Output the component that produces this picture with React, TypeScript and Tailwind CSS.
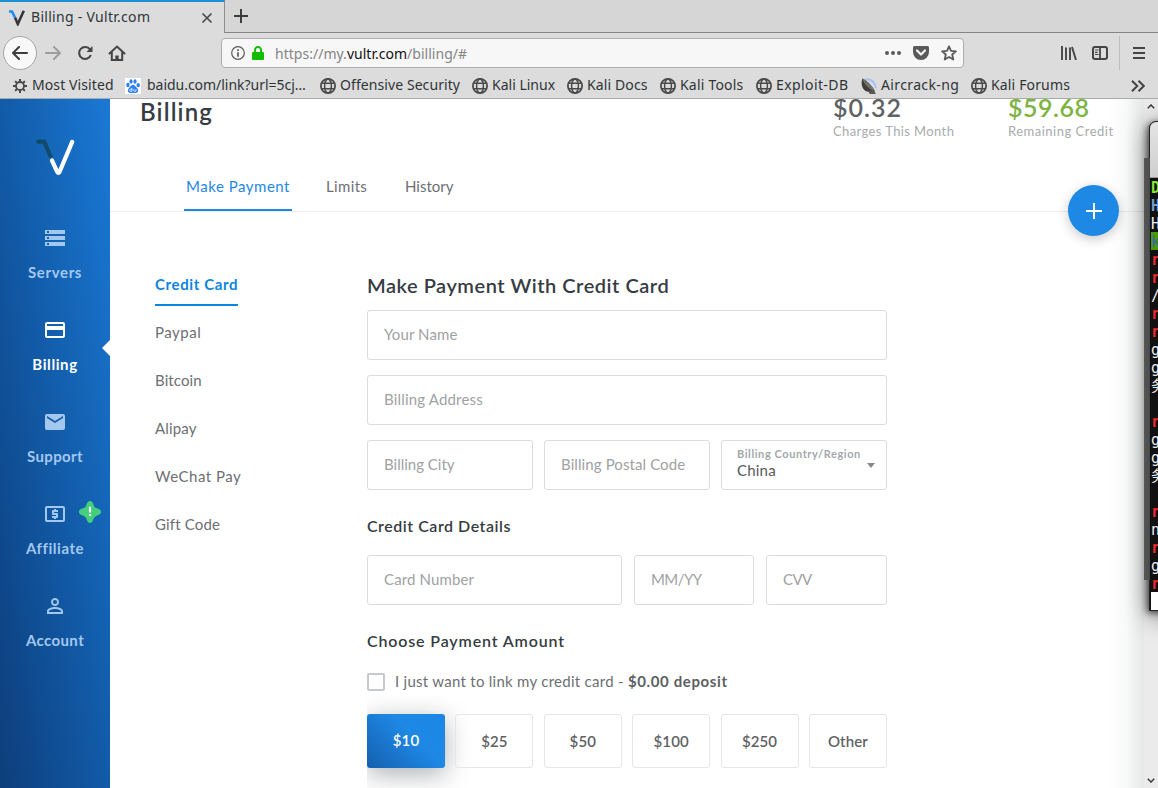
import type { ReactNode } from "react";
import { MdStorage, MdOutlinePayment, MdEmail, MdLocalAtm, MdPersonOutline } from "react-icons/md";

const GlobeIcon = () => (
  <svg width="16" height="16" viewBox="0 0 16 16" fill="none" stroke="#4a4a4a" strokeWidth="1.5" className="shrink-0">
    <circle cx="8" cy="8" r="7.1" strokeWidth="1.8" />
    <ellipse cx="8" cy="8" rx="3.4" ry="7" />
    <path d="M2 5.3h12M2 10.7h12" />
  </svg>
);

const GearIcon = () => (
  <svg width="16" height="16" viewBox="0 0 16 16" fill="none" stroke="#4a4a4a" className="shrink-0">
    <circle cx="8" cy="8" r="4" strokeWidth="1.8" />
    <path
      strokeWidth="2"
      d="M8 1v3M8 12v3M1 8h3M12 8h3M3.1 3.1l2 2M10.9 10.9l2 2M3.1 12.9l2-2M10.9 5.1l2-2"
    />
  </svg>
);

const PawIcon = () => (
  <svg width="16" height="16" viewBox="0 0 16 16" className="shrink-0">
    <rect width="16" height="16" fill="#fff" />
    <g fill="#2f80f2">
      <ellipse cx="2.9" cy="7" rx="1.7" ry="2.2" />
      <ellipse cx="6" cy="3.5" rx="1.6" ry="2.3" />
      <ellipse cx="10" cy="3.5" rx="1.6" ry="2.3" />
      <ellipse cx="13.2" cy="7.2" rx="1.7" ry="2.1" />
      <path d="M8 6.8c1.6 0 2.3 1.6 3.5 2.8 1.300 1.300 2 2.300 1.500 3.800-.5 1.700-2.300 1.700-5 1.600-2.700.1-4.500.1-5-1.600-.5-1.500.2-2.500 1.500-3.800C5.700 8.400 6.400 6.800 8 6.800z" />
    </g>
    <path d="M6.900 10v3.300H5.300c-1-.2-1-1.900 0-2h1.600M8.800 11.200v1.700c.3.600 1.600.6 2.200.2v-1.900" stroke="#fff" strokeWidth=".8" fill="none" />
  </svg>
);

const DishIcon = () => (
  <svg width="16" height="16" viewBox="0 0 16 16" className="shrink-0">
    <path d="M4.500 1.200c5.500-.6 9.700 3.300 10.200 9" stroke="#a4c2f2" strokeWidth="2" fill="none" />
    <path d="M6.500 3.800c3.200.2 5.400 2.600 5.800 6" stroke="#cfdef5" strokeWidth="2" fill="none" />
    <path d="M1.300.6C-.2 5.500.6 11 5 13.200c2.800 1.300 6.200.9 8.700-.2C11.500 8.500 6.500 3 1.300.6z" fill="#3f3e39" />
    <path d="M1.300.6C6.500 3 11.500 8.500 13.700 13 9.500 12.300 3.300 7.500 1.300.6z" fill="#716f66" />
    <path d="M7.500 12.800l5.800-.4 1.500 3.600H8.500z" fill="#5b5a52" />
  </svg>
);

type Bookmark = { label: string; icon: ReactNode; cls: string };

const bookmarks: Bookmark[] = [
  { label: "Most Visited", icon: <GearIcon />, cls: "w-[113px] gap-1 tracking-[0.1px]" },
  { label: "baidu.com/link?url=5cj…", icon: <PawIcon />, cls: "w-[195px] gap-1.5 tracking-[-0.03px]" },
  { label: "Offensive Security", icon: <GlobeIcon />, cls: "w-[152px] gap-1 tracking-[0.08px]" },
  { label: "Kali Linux", icon: <GlobeIcon />, cls: "w-[95px] gap-1 tracking-[0px]" },
  { label: "Kali Docs", icon: <GlobeIcon />, cls: "w-[93px] gap-1 tracking-[0.12px]" },
  { label: "Kali Tools", icon: <GlobeIcon />, cls: "w-[96px] gap-1 tracking-[0.2px]" },
  { label: "Exploit-DB", icon: <GlobeIcon />, cls: "w-[105px] gap-1 tracking-[0.4px]" },
  { label: "Aircrack-ng", icon: <DishIcon />, cls: "w-[110px] gap-1 tracking-[0.37px]" },
  { label: "Kali Forums", icon: <GlobeIcon />, cls: "gap-1 tracking-[0.15px]" },
];

function BrowserChrome() {
  return (
    <header className="flex h-[99px] shrink-0 flex-col border-b border-[#aaa] bg-[#dcdcdc] font-['Noto_Sans',sans-serif] text-[14px] text-[#2e3436]">
      <div className="flex h-[33px] bg-[#d6d6d6]">
        <div className="flex w-[225px] items-center border-t-2 border-r border-t-[#1e8fd0] border-r-[#8d8d8d] bg-[#dcdcdc] pr-[11px] pl-2">
          <svg width="17" height="16" viewBox="0 0 17 16" fill="none" strokeWidth="2.600">
            <path d="M1 1.500h3l3 6" stroke="#1f8cf0" />
            <path d="M7 7.500l2.800 6.500L15.800.8" stroke="#33373b" />
          </svg>
          <span className="ml-1.5 grow pb-[2px] whitespace-nowrap tracking-[0.29px]">Billing - Vultr.com</span>
          <svg width="12" height="12" viewBox="0 0 12 12" stroke="#4a4a4a" strokeWidth="1.700">
            <path d="M1.500 1.500l9 9M10.500 1.500l-9 9" />
          </svg>
        </div>
        <div className="flex grow items-center border-b border-[#858585] pl-[9px]">
          <svg width="14" height="14" viewBox="0 0 14 14" stroke="#3c3c3c" strokeWidth="2">
            <path d="M0 7h14M7 0v14" />
          </svg>
        </div>
      </div>

      <div className="flex h-10 items-center pl-[3px]">
        <div className="flex size-[34px] items-center justify-center rounded-full border border-[#a5a5a5] bg-[#f8f8f8]">
          <svg width="16" height="14" viewBox="0 0 16 14" fill="none" stroke="#3d3d3d" strokeWidth="2" strokeLinecap="round" strokeLinejoin="round">
            <path d="M15 7H1.500M7 1L1 7l6 6" />
          </svg>
        </div>
        <svg className="ml-2" width="16" height="14" viewBox="0 0 16 14" fill="none" stroke="#9d9d9d" strokeWidth="2" strokeLinecap="round" strokeLinejoin="round">
          <path d="M1 7h13.500M9 1l6 6-6 6" />
        </svg>
        <svg className="ml-4" width="16" height="16" viewBox="0 0 16 16" fill="none" stroke="#454545" strokeWidth="2.100">
          <path d="M13 4.400A6 6 0 1 0 13.800 10" />
          <path d="M15.500 1v6h-6z" fill="#454545" stroke="none" />
        </svg>
        <svg className="ml-[15px]" width="18" height="16" viewBox="0 0 18 16" fill="none" stroke="#454545" strokeWidth="2">
          <path d="M1.500 8.500L9 1.500l7.500 7M3.800 7.500V15h10.400V7.500" strokeLinecap="round" />
          <path d="M9 15v-4.500" strokeWidth="3.400" />
        </svg>

        <div className="ml-[95px] flex h-[30px] w-[743px] items-center rounded-[4px] border border-[#adadad] bg-[#f7f7f7] pr-[6px] pl-[9px]">
          <svg width="14" height="14" viewBox="0 0 14 14" fill="none" stroke="#5b5b5b" strokeWidth="1.200">
            <circle cx="7" cy="7" r="6.300" />
            <path d="M7 6.200v4.600M7 3.200v1.700" strokeWidth="1.700" />
          </svg>
          <svg className="ml-[7px]" width="12" height="14" viewBox="0 0 12 14">
            <path d="M2.900 7V4.300a3.100 3.300 0 0 1 6.200 0V7" fill="none" stroke="#12bc00" strokeWidth="2" />
            <rect y="6" width="12" height="8" rx="1" fill="#12bc00" />
          </svg>
          <span className="ml-[11px] grow text-[14px] tracking-[0.02px] text-[#858585]">
            https://my.<span className="text-[#111]">vultr.com</span>/billing/#
          </span>
          <svg width="16" height="4" viewBox="0 0 16 4" fill="#5a5a5a">
            <circle cx="2" cy="2" r="2" />
            <circle cx="8" cy="2" r="2" />
            <circle cx="14" cy="2" r="2" />
          </svg>
          <svg className="ml-3" width="16" height="14" viewBox="0 0 16 14">
            <path d="M1.500 0h13A1.500 1.500 0 0 1 16 1.500V6a8 8 0 0 1-16 0V1.500A1.500 1.500 0 0 1 1.500 0z" fill="#5a5a5a" />
            <path d="M4 4.500l4 4 4-4" fill="none" stroke="#f7f7f7" strokeWidth="2.200" strokeLinecap="round" strokeLinejoin="round" />
          </svg>
          <svg className="ml-3" width="16" height="16" viewBox="0 0 16 16" fill="none" stroke="#5a5a5a" strokeWidth="1.800" strokeLinejoin="round">
            <path d="M8 1.300l2 4.500 4.900.5-3.700 3.200 1.100 5L8 12l-4.300 2.500 1.100-5L1.100 6.300 6 5.800z" />
          </svg>
        </div>

        <svg className="ml-[97px]" width="16" height="14" viewBox="0 0 16 14" stroke="#454545" strokeWidth="2">
          <path d="M1 0v14M5 1.500V14M9 1.500V14M11 1l4 13" strokeWidth="1.900" />
        </svg>
        <svg className="ml-[15px]" width="16" height="14" viewBox="0 0 16 14" fill="none" stroke="#454545">
          <rect x="1" y="1" width="14" height="12" rx="2" strokeWidth="2" />
          <path d="M8 1v12" strokeWidth="1.800" />
          <path d="M3 4h3.500M3 6.300h2.500M3 8.500h3.500" strokeWidth="1.200" />
        </svg>
        <div className="ml-[11px] h-[34px] w-px bg-[#bdbdbd]" />
        <svg className="ml-[13px]" width="12" height="12" viewBox="0 0 12 12" stroke="#454545" strokeWidth="2">
          <path d="M0 1h12M0 6h12M0 11h12" />
        </svg>
      </div>

      <div className="flex h-[25px] items-center pl-3 whitespace-nowrap">
        {bookmarks.map((b) => (
          <div key={b.label} className={`flex shrink-0 items-center ${b.cls}`}>
            {b.icon}
            <span className="pb-[2px]">{b.label}</span>
          </div>
        ))}
        <svg className="mr-[13px] ml-auto" width="14" height="12" viewBox="0 0 14 12" fill="none" stroke="#454545" strokeWidth="2">
          <path d="M1 .7L6.300 6 1 11.300M7.500 .7L12.800 6l-5.300 5.300" />
        </svg>
      </div>
    </header>
  );
}

const navItems = [
  { label: "Servers", Icon: MdStorage, track: "tracking-[0.65px]" },
  { label: "Billing", Icon: MdOutlinePayment, track: "tracking-[0.6px]", active: true },
  { label: "Support", Icon: MdEmail, track: "tracking-[0.35px]" },
  { label: "Affiliate", Icon: MdLocalAtm, track: "tracking-[0.55px]", badge: true },
  { label: "Account", Icon: MdPersonOutline, track: "tracking-[0.4px]" },
];

function Sidebar() {
  return (
    <nav className="flex w-[110px] shrink-0 flex-col items-center bg-linear-[to_top_right,#0d3e7b,#125ba8_50%,#1a79d5] pt-10">
      <svg width="40" height="37" viewBox="0 0 40 37" fill="none" strokeWidth="4.200">
        <path d="M3.200 2.600h6L15.400 17" stroke="#124a6b" strokeLinecap="round" strokeLinejoin="round" />
        <path d="M17 21.500l5.200 11.300q1.200 2.300 2.400 0L37.200 2.900" stroke="#fff" strokeLinecap="round" strokeLinejoin="round" />
      </svg>
      <ul className="mt-[50px] w-full">
        {navItems.map(({ label, Icon, track, active, badge }) => (
          <li
            key={label}
            className={`relative flex h-[92px] flex-col items-center text-[15px] leading-5 font-bold ${track} ${active ? "text-white" : "text-[#a3c8ef]"}`}
          >
            <Icon size={24} />
            <span className="mt-3">{label}</span>
            {active && (
              <svg className="absolute top-[22px] right-0" width="8" height="16" viewBox="0 0 8 16">
                <path d="M8 0v16L0 8z" fill="#fff" />
              </svg>
            )}
            {badge && (
              <svg className="absolute top-[-1px] right-[9px]" width="22" height="22" viewBox="0 0 22 22">
                <path
                  d="M11 0c2.500 0 3 2.700 3.900 4.700.5 1.200 1.200 1.900 2.400 2.400C19.300 8 22 8.500 22 11s-2.700 3-4.700 3.900c-1.200.5-1.900 1.200-2.400 2.400C14 19.300 13.500 22 11 22s-3-2.700-3.900-4.700c-.5-1.200-1.200-1.900-2.400-2.400C2.700 14 0 13.500 0 11s2.700-3 4.700-3.900c1.200-.5 1.900-1.200 2.400-2.400C8 2.700 8.500 0 11 0z"
                  fill="#45cf7c"
                />
                <path d="M11 5.800v5.600M11 13v2" stroke="#fff" strokeWidth="2.100" />
              </svg>
            )}
          </li>
        ))}
      </ul>
    </nav>
  );
}

const methods = [
  { label: "Paypal", track: "tracking-[0.5px]" },
  { label: "Bitcoin", track: "tracking-[0.1px]" },
  { label: "Alipay", track: "tracking-[0.15px]" },
  { label: "WeChat Pay", track: "tracking-[0.5px]" },
  { label: "Gift Code", track: "tracking-[0.15px]" },
];

function Field({ label, cls = "" }: { label: string; cls?: string }) {
  return (
    <div className={`flex h-[50px] items-center rounded-[3px] border border-[#dadcdd] px-4 pb-[2px] text-[15px] text-[#a0a2a3] ${cls}`}>
      <span className="whitespace-nowrap">{label}</span>
    </div>
  );
}

function PaymentForm() {
  return (
    <section className="w-[520px]">
      <h2 className="flex h-[48px] items-center pb-[2px] text-[20px] font-semibold tracking-[0.53px] whitespace-nowrap text-[#363c42]">
        Make Payment With Credit Card
      </h2>
      <div className="grid grid-cols-3 gap-x-[11px] gap-y-[15px]">
        <Field label="Your Name" cls="col-span-3 tracking-[0.1px]" />
        <Field label="Billing Address" cls="col-span-3 tracking-[0.18px]" />
        <Field label="Billing City" />
        <Field label="Billing Postal Code" cls="tracking-[0.1px]" />
        <div className="flex h-[50px] items-center justify-between rounded-[3px] border border-[#dadcdd] pr-[11px] pl-[15px]">
          <div className="flex w-[124px] shrink-0 flex-col pb-[4px] whitespace-nowrap">
            <span className="text-[11px] leading-[14px] font-bold tracking-[0.58px] text-[#a3a8ac]">Billing Country/Region</span>
            <span className="text-[15px] leading-[19px] tracking-[0.2px] text-[#55585b]">China</span>
          </div>
          <svg className="shrink-0" width="8" height="5" viewBox="0 0 8 5">
            <path d="M0 0h8L4 5z" fill="#85898c" />
          </svg>
        </div>
      </div>
      <h3 className="mt-[22px] flex h-[28px] items-center text-[16px] font-semibold tracking-[0.52px] text-[#363c42]">Credit Card Details</h3>
      <div className="mt-[15px] flex gap-3">
        <Field label="Card Number" cls="w-[255px] tracking-[0.13px]" />
        <Field label="MM/YY" cls="w-[120px] tracking-[-0.6px]" />
        <Field label="CVV" cls="w-[121px] tracking-[-0.6px]" />
      </div>
      <h3 className="mt-[22px] flex h-[28px] items-center text-[16px] font-semibold tracking-[0.85px] text-[#363c42]">Choose Payment Amount</h3>
      <label className="mt-[17px] flex h-[20px] items-center text-[15px] whitespace-nowrap text-[#6d7073]">
        <span className="size-[18px] rounded-[2px] border-2 border-[#c6cacd]" />
        <span className="ml-[10px] pb-[2px] tracking-[0.27px]">
          I just want to link my credit card - <b className="font-bold tracking-[0.62px] text-[#5c5f62]">$0.00 deposit</b>
        </span>
      </label>
      <div className="mt-[4px] flex h-[140px] items-start justify-between overflow-hidden pt-[18px] text-[15px] font-semibold tracking-[0.1px] text-[#5f6265]">
        <div className="flex h-[54px] w-[78px] items-center justify-center rounded-[3px] bg-linear-[45deg,#1560ae,#1e88e5_60%,#1c86e6] pb-[2px] text-white shadow-[0_6px_26px_rgba(0,20,30,0.34)]">
          $10
        </div>
        {["$25", "$50", "$100", "$250", "Other"].map((amount) => (
          <div key={amount} className="flex h-[54px] w-[78px] items-center justify-center rounded-[3px] border border-[#e4e6e7]">
            {amount}
          </div>
        ))}
      </div>
    </section>
  );
}

function BillingPage() {
  return (
    <main className="min-w-0 grow overflow-hidden bg-white">
      <div className="flex h-[113px] flex-col justify-between border-b border-[#eceeef]">
        <div className="flex h-[45px] pl-[30px] whitespace-nowrap">
          <h1 className="mt-px w-[693px] text-[24px] leading-6 font-semibold tracking-[1.15px] text-[#363c42]">Billing</h1>
          <div className="mt-[-4px] w-[175px]">
            <div className="text-[25px] leading-6 font-semibold tracking-[1px] text-[#5f6265]">$0.32</div>
            <div className="mt-[4px] text-[13px] leading-4 tracking-[0.39px] text-[#a8abad]">Charges This Month</div>
          </div>
          <div className="mt-[-4px]">
            <div className="text-[25px] leading-6 font-semibold tracking-[0.5px] text-[#7cb342]">$59.68</div>
            <div className="mt-[4px] text-[13px] leading-4 tracking-[0.5px] text-[#a8abad]">Remaining Credit</div>
          </div>
        </div>
        <div className="flex h-[48px] pl-[74px] text-[15px] whitespace-nowrap text-[#6d7073]">
          <a className="flex w-[108px] items-center justify-center border-y-2 border-t-transparent border-b-[#1e88e5] pb-[2px] tracking-[0.52px] text-[#1e88e5]">Make Payment</a>
          <a className="ml-[34px] flex w-[79px] items-center pb-[2px] tracking-[0.35px]">Limits</a>
          <a className="flex items-center pb-[2px]">History</a>
        </div>
      </div>
      <div className="flex pt-[50px] pl-[45px]">
        <ul className="w-[212px] text-[15px] text-[#6d7073]">
          <li className="flex h-11 w-[83px] items-end border-b-2 border-[#0b85e0] pb-[9px] leading-[21px] font-bold tracking-[0.62px] whitespace-nowrap text-[#0b85e0]">
            Credit Card
          </li>
          {methods.map((m) => (
            <li key={m.label} className={`mt-[3px] flex h-[45px] items-center pt-[2px] ${m.track}`}>
              {m.label}
            </li>
          ))}
        </ul>
        <PaymentForm />
      </div>
    </main>
  );
}

const lines: { text: string; cls: string }[] = [
  { text: "D", cls: "font-bold text-[#8ae234]" },
  { text: "H", cls: "font-bold text-[#729fcf]" },
  { text: "H", cls: "text-[#eee]" },
  { text: "k", cls: "bg-[#4e9a06] text-[#3465a4]" },
  { text: "r", cls: "font-bold text-[#ef2929]" },
  { text: "r", cls: "font-bold text-[#ef2929]" },
  { text: "/", cls: "text-[#eee]" },
  { text: "r", cls: "font-bold text-[#ef2929]" },
  { text: "r", cls: "font-bold text-[#ef2929]" },
  { text: "g", cls: "text-[#eee]" },
  { text: "g", cls: "text-[#eee]" },
  { text: "务", cls: "text-[#eee]" },
  { text: "", cls: "" },
  { text: "r", cls: "font-bold text-[#ef2929]" },
  { text: "g", cls: "text-[#eee]" },
  { text: "g", cls: "text-[#eee]" },
  { text: "务", cls: "text-[#eee]" },
  { text: "", cls: "" },
  { text: "r", cls: "font-bold text-[#ef2929]" },
  { text: "n", cls: "text-[#eee]" },
  { text: "r", cls: "font-bold text-[#ef2929]" },
  { text: "g", cls: "text-[#eee]" },
  { text: "r", cls: "font-bold text-[#ef2929]" },
];

function TerminalWindow() {
  return (
    <div className="absolute top-[121px] left-[1149px] h-[490px] w-[60px] rounded-tl-[7px] border border-[#222] bg-[#111] shadow-[-2px_2px_6px_rgba(0,0,0,0.6),0_4px_24px_rgba(0,0,0,0.55)]">
      <div className="h-[56px] rounded-tl-[6px] border-b border-[#999] bg-linear-to-b from-[#e4e4e4] to-[#cfcfcf]" />
      <div className="ml-px font-['DejaVu_Sans_Mono','Noto_Sans_CJK_SC',monospace] text-[15px] leading-[20px]">
        {lines.map((l, i) => (
          <div key={i} className={`h-[18px] overflow-hidden ${l.cls}`}>
            {l.text}
          </div>
        ))}
      </div>
      <div className="ml-px h-[18px] bg-white" />
    </div>
  );
}

export default function App() {
  return (
    <div className="relative flex h-[788px] w-[1158px] flex-col overflow-hidden bg-white font-[Lato,sans-serif]">
      <BrowserChrome />
      <div className="relative flex min-h-0 grow overflow-hidden">
        <Sidebar />
        <BillingPage />
        <div className="flex w-[14px] shrink-0 flex-col items-center justify-between bg-[#ebebeb] py-[5px]">
          <svg width="8" height="5" viewBox="0 0 8 5" fill="none" stroke="#3a3a3a" strokeWidth="1.500">
            <path d="M.8 4.200L4 1l3.200 3.200" />
          </svg>
          <svg width="8" height="5" viewBox="0 0 8 5" fill="none" stroke="#3a3a3a" strokeWidth="1.500">
            <path d="M.8.8L4 4 7.200.8" />
          </svg>
        </div>
        <div className="pointer-events-none absolute inset-y-0 right-[14px] w-9 bg-linear-to-r from-[#7b8a84]/0 via-[#7b8a84]/5 to-[#7b8a84]/20" />
      </div>
      <button className="absolute top-[185px] left-[1068px] flex size-[51px] items-center justify-center rounded-full bg-[#1e88e5] shadow-[0_3px_12px_rgba(0,0,0,0.22)]">
        <svg width="16" height="16" viewBox="0 0 16 16" stroke="#fff" strokeWidth="2">
          <path d="M0 8h16M8 0v16" />
        </svg>
      </button>
      <TerminalWindow />
      <div className="absolute top-[158px] left-[1144px] h-[422px] w-[6px] bg-[#4c4c4c]/90" />
    </div>
  );
}
